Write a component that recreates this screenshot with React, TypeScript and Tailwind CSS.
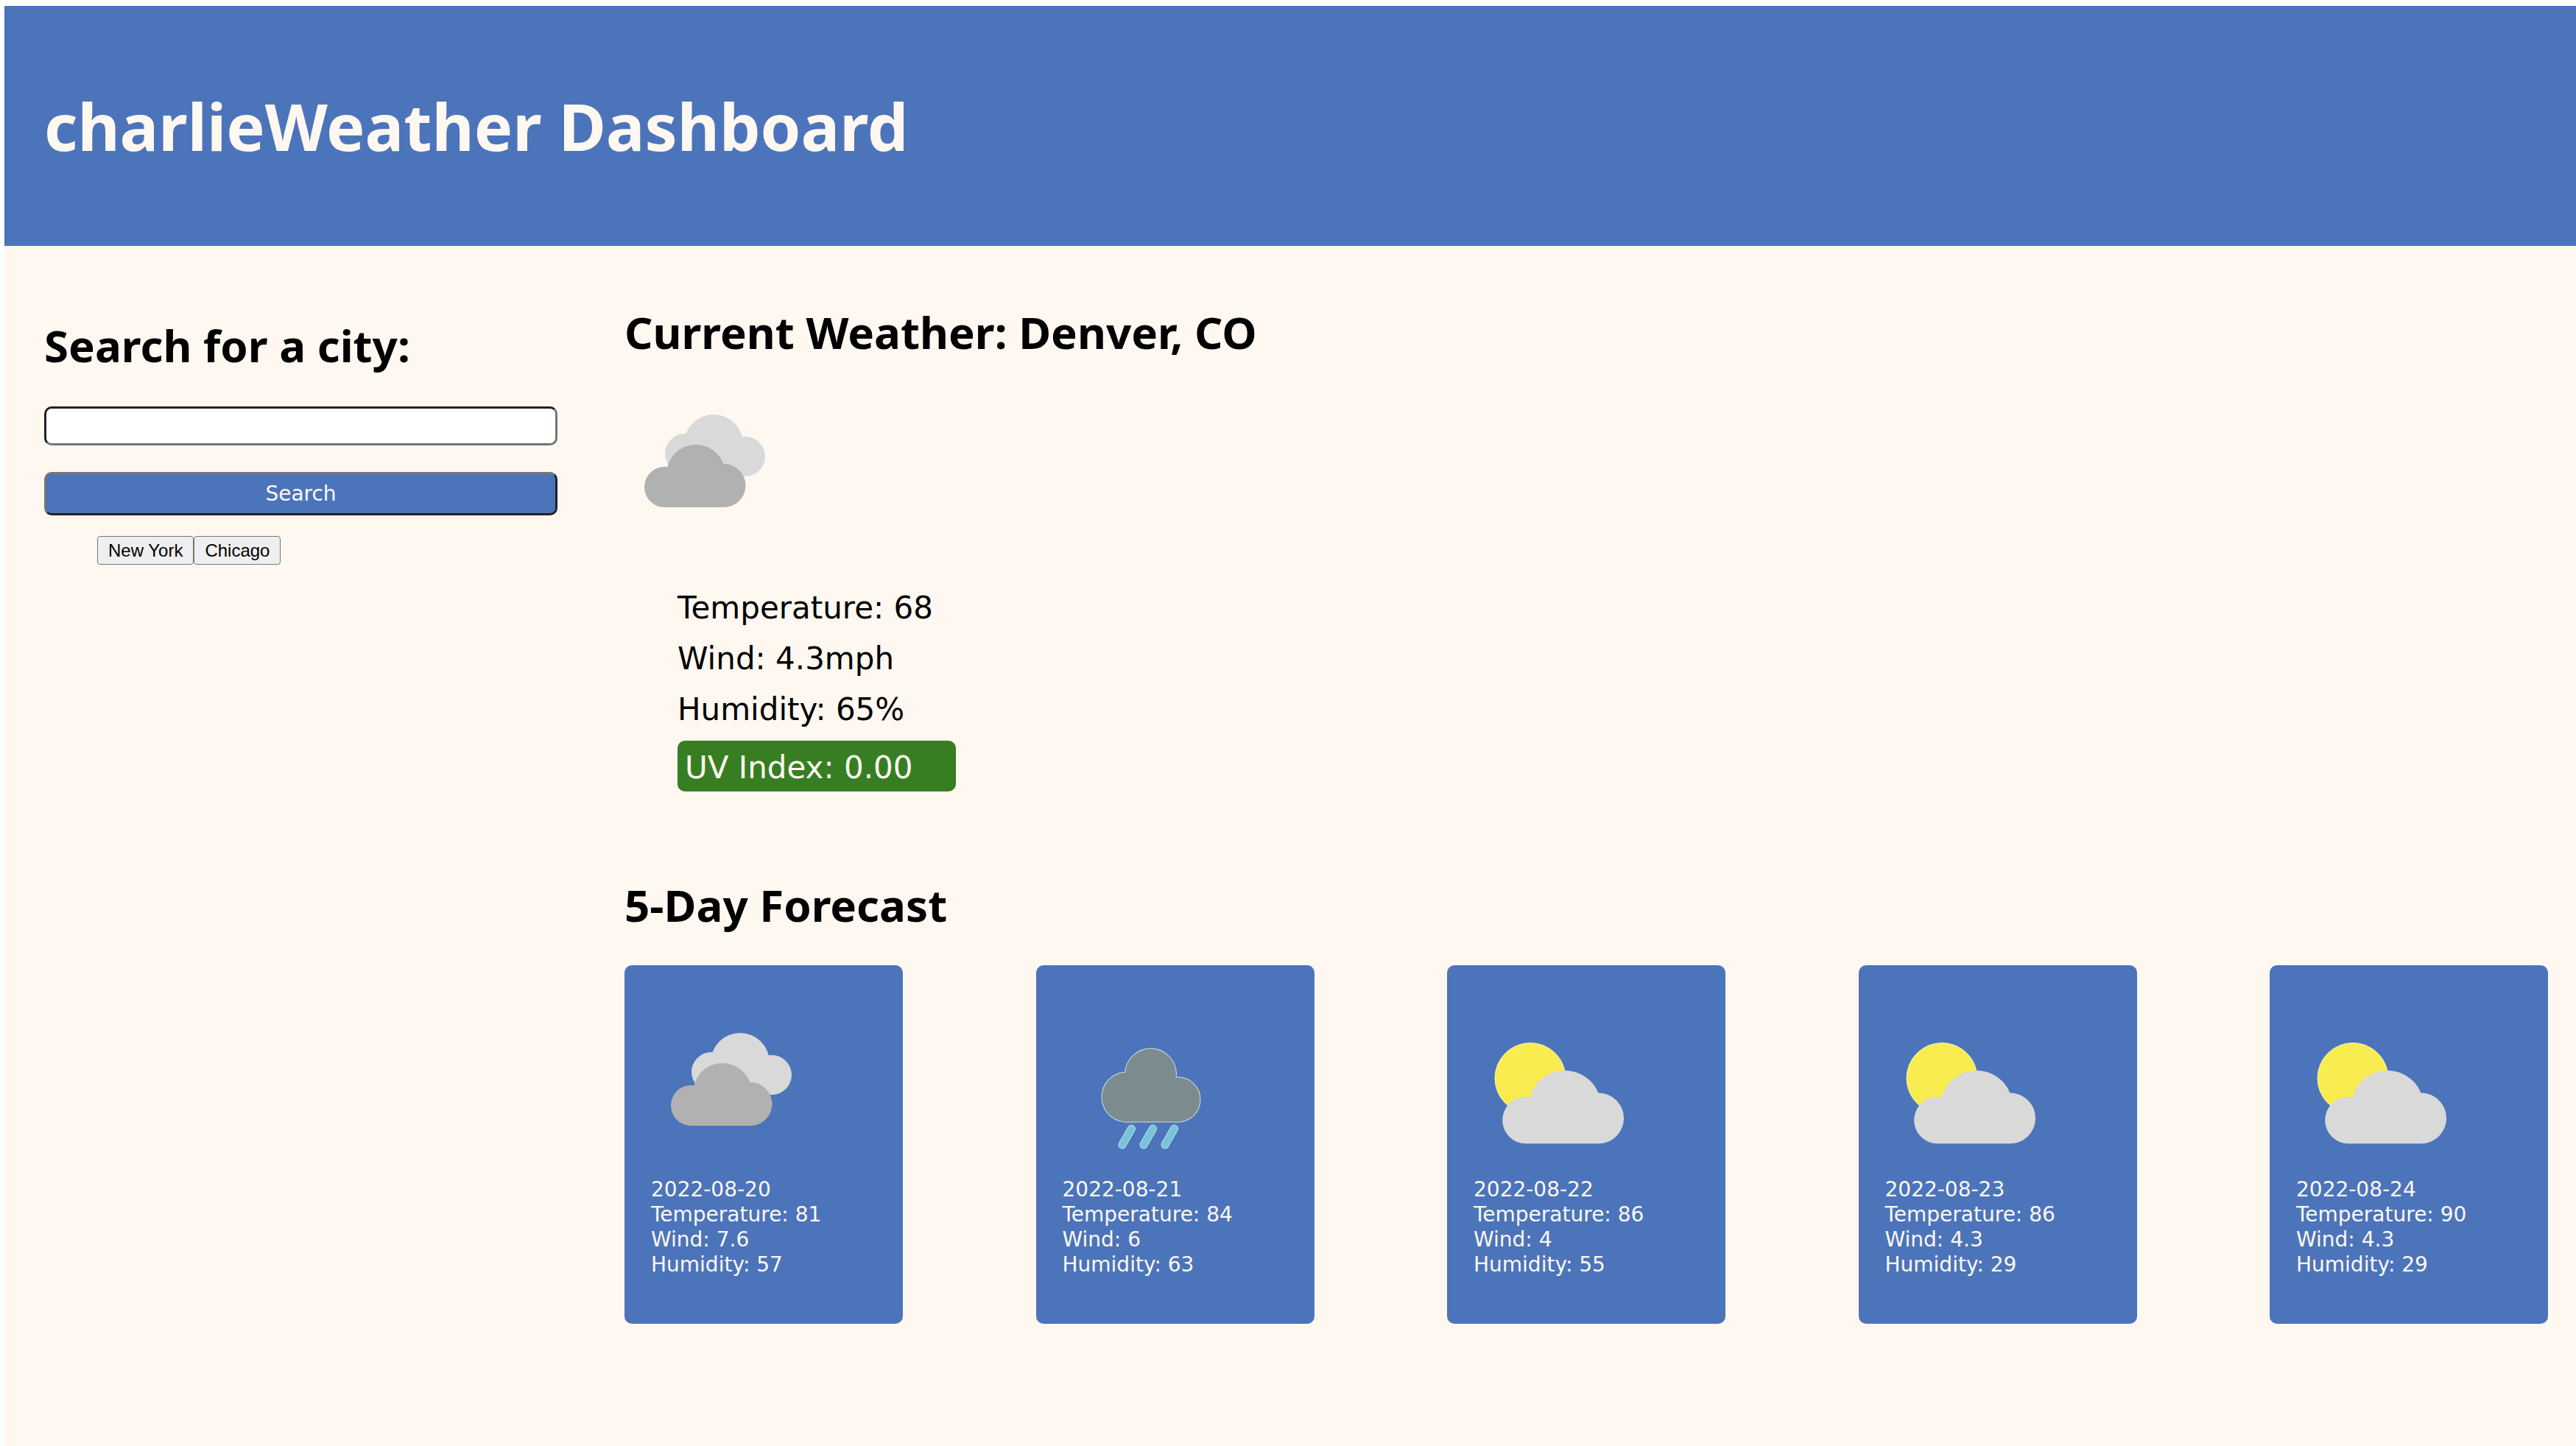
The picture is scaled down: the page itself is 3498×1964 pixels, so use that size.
import React from "react";

type Sky = "broken" | "rain" | "few";

const forecast: { date: string; sky: Sky; temp: number; wind: number; humidity: number }[] = [
  { date: "2022-08-20", sky: "broken", temp: 81, wind: 7.6, humidity: 57 },
  { date: "2022-08-21", sky: "rain", temp: 84, wind: 6, humidity: 63 },
  { date: "2022-08-22", sky: "few", temp: 86, wind: 4, humidity: 55 },
  { date: "2022-08-23", sky: "few", temp: 86, wind: 4.3, humidity: 29 },
  { date: "2022-08-24", sky: "few", temp: 90, wind: 4.3, humidity: 29 },
];

const cities = ["New York", "Chicago"];

function BrokenClouds() {
  return (
    <>
      <g fill="#d9d9d9">
        <circle cx="121" cy="96" r="40" />
        <circle cx="82" cy="109" r="27" />
        <circle cx="164" cy="113" r="27" />
        <rect x="82" y="90" width="82" height="50" />
      </g>
      <g fill="#b1b1b1">
        <circle cx="97" cy="137" r="40" />
        <circle cx="54.5" cy="154.5" r="27.5" />
        <circle cx="135" cy="152.5" r="29.5" />
        <rect x="54" y="140" width="81" height="42" />
      </g>
    </>
  );
}

function RainCloudShape() {
  return (
    <>
      <circle cx="119.5" cy="112" r="34.5" />
      <circle cx="87" cy="143" r="33.5" />
      <circle cx="156.5" cy="146.5" r="30" />
      <rect x="87" y="118" width="69.5" height="58.5" />
    </>
  );
}

function Rain() {
  return (
    <>
      <g fill="#d3dada" stroke="#d3dada" strokeWidth="2">
        <RainCloudShape />
      </g>
      <g fill="#7b8b8e">
        <RainCloudShape />
      </g>
      {[0, 29, 58].map((dx) => (
        <g key={dx} strokeLinecap="round">
          <line x1={93.5 + dx} y1="186" x2={81 + dx} y2="208" stroke="#b5e0ea" strokeWidth="11" />
          <line x1={93.5 + dx} y1="186" x2={81 + dx} y2="208" stroke="#78c3da" strokeWidth="9" />
        </g>
      ))}
    </>
  );
}

function FewClouds() {
  return (
    <>
      <circle cx="77" cy="117.5" r="48" fill="#f9ec51" stroke="#fbf6b0" />
      <g fill="#d9d9d9">
        <circle cx="124" cy="156" r="49" />
        <circle cx="71" cy="174.5" r="31.8" />
        <circle cx="169.5" cy="171.8" r="34.5" />
        <rect x="71" y="160" width="98.5" height="46.3" />
      </g>
    </>
  );
}

function SkyIcon({ sky, label }: { sky: Sky; label: string }) {
  return (
    <svg className="block size-[220px]" viewBox="0 0 220 220" role="img" aria-label={label}>
      {sky === "broken" && <BrokenClouds />}
      {sky === "rain" && <Rain />}
      {sky === "few" && <FewClouds />}
    </svg>
  );
}

export default function App() {
  return (
    <div className="min-h-screen bg-white pt-2 pl-1.5 font-['DejaVu_Sans',sans-serif] text-black">
      <div className="min-h-[calc(100vh-8px)] bg-[#fef8f1]">
        <header className="bg-[#4c74bb] px-[54px] py-28 text-[#fef8f1]">
          <h1 className="font-['Noto_Sans',sans-serif] text-[88px] leading-[102px] font-bold">
            charlieWeather Dashboard
          </h1>
        </header>

        <div className="flex items-start gap-[91px] pr-[38px] pl-[54px]">
          <aside className="w-[20.5%] shrink-0 pt-[99px]">
            <form onSubmit={(e) => e.preventDefault()}>
              <h2 className="font-['Noto_Sans',sans-serif] text-[60px] leading-[72px] font-bold">
                <label htmlFor="city">Search for a city:</label>
              </h2>
              <input
                id="city"
                type="text"
                className="mt-[47px] block h-[53px] w-full rounded-[10px] border-[3px] border-t-[#222222] border-r-[#767676] border-b-[#767676] border-l-[#222222] bg-white px-2 text-[28px]"
              />
              <button
                type="submit"
                className="mt-9 block h-[59px] w-full rounded-[10px] border-[3px] border-t-[#767676] border-r-[#222222] border-b-[#222222] border-l-[#767676] bg-[#4c74bb] text-[28px] leading-[34px] text-[#fef8f1]"
              >
                Search
              </button>
            </form>
            <ul className="mt-7 flex pl-[72px]">
              {cities.map((city) => (
                <li key={city}>
                  <button
                    type="button"
                    className="block h-[39px] rounded-[4px] border border-[#767676] bg-[#efefef] px-3.5 font-['Liberation_Sans',Arial,sans-serif] text-[24px] leading-[28px]"
                  >
                    {city}
                  </button>
                </li>
              ))}
            </ul>
          </aside>

          <main className="min-w-0 flex-1 pt-[81px]">
            <section>
              <h2 className="font-['Noto_Sans',sans-serif] text-[60px] leading-[72px] font-bold">
                Current Weather: Denver, CO
              </h2>
              <div className="mt-5">
                <SkyIcon sky="broken" label="Current conditions" />
              </div>
              <ul className="mt-16 w-[450px] pl-[72px] text-[42px] leading-[69px]">
                <li>Temperature: 68</li>
                <li>Wind: 4.3mph</li>
                <li>Humidity: 65%</li>
                <li className="mt-2 rounded-[10px] bg-[#377e22] px-2.5 pt-1 leading-[65px] text-[#fef8f1]">
                  UV Index: 0.00
                </li>
              </ul>
            </section>

            <section className="mt-[118px]">
              <h2 className="font-['Noto_Sans',sans-serif] text-[60px] leading-[72px] font-bold">5-Day Forecast</h2>
              <div className="mt-[46px] flex justify-between">
                {forecast.map((day) => (
                  <article
                    key={day.date}
                    className="w-[378px] rounded-[10px] bg-[#4c74bb] px-9 pt-9 pb-[63px] text-[#fef8f1]"
                  >
                    <SkyIcon sky={day.sky} label={"Forecast for " + day.date} />
                    <ul className="mt-8 text-[28px] leading-[34px]">
                      <li>{day.date}</li>
                      <li>Temperature: {day.temp}</li>
                      <li>Wind: {day.wind}</li>
                      <li>Humidity: {day.humidity}</li>
                    </ul>
                  </article>
                ))}
              </div>
            </section>
          </main>
        </div>
      </div>
    </div>
  );
}
